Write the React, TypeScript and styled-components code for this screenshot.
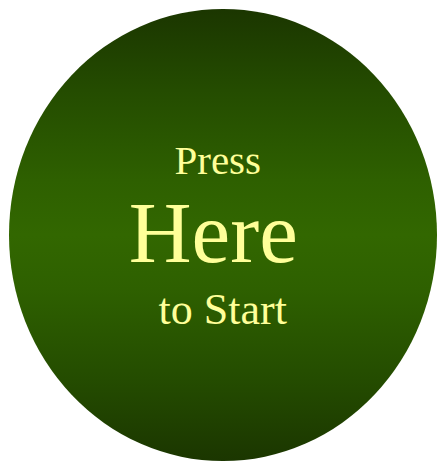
import React from "react";
import styled, { createGlobalStyle } from "styled-components";

const Global = createGlobalStyle`
  html, body { margin: 0; padding: 0; background: #ffffff; }
  #root { width: 446px; height: 471px; }
`;

const Page = styled.div`
  box-sizing: border-box;
  width: 446px;
  height: 471px;
  padding: 9px 9.5px 10px 9px;
  display: flex;
`;

const StartButton = styled.button`
  flex: 1;
  border: none;
  margin: 0;
  padding: 3px 0 0 0;
  border-radius: 50%;
  cursor: pointer;
  background: linear-gradient(
    to bottom,
    #1b3600 0%,
    #244c00 18%,
    #2e6000 38%,
    #326700 50%,
    #2e6000 62%,
    #244c00 82%,
    #1b3600 100%
  );
  display: flex;
  flex-direction: column;
  align-items: center;
  justify-content: center;
  font-family: "Liberation Serif", "Times New Roman", serif;
  color: #ffff99;
`;

const Line = styled.span<{ $size: number; $lh: number; $shift: number }>`
  display: block;
  font-size: ${(p) => p.$size}px;
  line-height: ${(p) => p.$lh}px;
  transform: translateX(${(p) => p.$shift}px);
  white-space: nowrap;
`;

export default function App() {
  return (
    <>
      <Global />
      <Page>
        <StartButton type="button">
          <Line $size={41} $lh={40} $shift={-5}>Press</Line>
          <Line $size={87} $lh={106} $shift={-9.5}>Here</Line>
          <Line $size={44} $lh={48} $shift={0}>to Start</Line>
        </StartButton>
      </Page>
    </>
  );
}
